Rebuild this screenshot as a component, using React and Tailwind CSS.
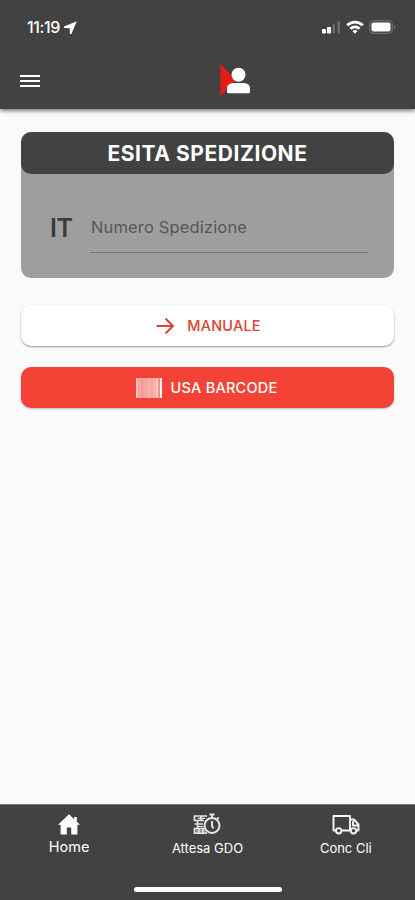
import { useState } from 'react';

const StatusBar = () => (
    <div className="flex h-[54px] items-center justify-between pr-[18px] pl-[27px]">
        <div className="flex items-center gap-[4px]">
            <span className="text-[16px] leading-5 font-medium tracking-[-0.35px]">11:19</span>
            <svg width="13" height="13" viewBox="0 0 13 13" fill="currentColor">
                <path d="M12.8.2 0 5.6v1.5l5.7.2.2 5.7h1.5z" />
            </svg>
        </div>
        <div className="flex items-center gap-[5px]">
            <svg width="20" height="14" viewBox="0 0 20 14" fill="currentColor">
                <rect x="1" y="9" width="4" height="4.5" rx="1" />
                <rect x="6" y="7" width="4" height="6.5" rx="1" />
                <rect x="11.5" y="4" width="2.5" height="9.5" rx="1" opacity="0.22" />
                <rect x="16.5" y="1" width="2.5" height="12.5" rx="1" opacity="0.22" />
            </svg>
            <svg width="18" height="14" viewBox="0 0 18 14" fill="none" stroke="currentColor" strokeWidth="2.8">
                <path d="M1.2 5.3C5.6 1 12.4 1 16.8 5.3" />
                <path d="M4.4 8.8c2.7-2.5 6.5-2.5 9.2 0" />
                <path d="M6.4 11 9 13.7l2.6-2.7c-1.5-1.4-3.7-1.4-5.2 0z" fill="currentColor" stroke="none" />
            </svg>
            <svg width="28" height="14" viewBox="0 0 28 14">
                <rect x="0.7" y="0.7" width="22.6" height="12.6" rx="4" fill="none" stroke="#6d6d6d" strokeWidth="1.3" />
                <rect x="2.5" y="2.5" width="19" height="9" rx="2" fill="#fff" />
                <path d="M24.8 4.7c2 .6 2 4 0 4.6z" fill="#6d6d6d" />
            </svg>
        </div>
    </div>
);

const Logo = () => (
    <svg width="32" height="34" viewBox="0 0 32 34">
        <path d="M.5 0v32L16 16z" fill="#e51b17" />
        <circle cx="18.5" cy="10.8" r="7" fill="#fff" />
        <path d="M7 28V24.500c0-4 3-5.500 7.500-5.500h8c4.500 0 7.500 1.500 7.500 5.500V28q0 1.200-1.200 1.200H8.200Q7 29.200 7 28z" fill="#fff" />
    </svg>
);

const BarcodeIcon = () => (
    <svg width="27" height="20" viewBox="0 0 27 20" fill="#fff">
        <rect x="0" width="2" height="20" opacity="0.7" />
        <rect x="2" width="5" height="20" opacity="0.45" />
        <rect x="3" width="2" height="20" opacity="0.2" />
        <rect x="7" width="13" height="20" opacity="0.52" />
        <rect x="12" width="2" height="20" opacity="0.15" />
        <rect x="17" width="2" height="20" opacity="0.2" />
        <rect x="20" width="2" height="20" opacity="0.75" />
        <rect x="22" width="2" height="20" opacity="0.4" />
        <rect x="24" width="2" height="20" opacity="0.95" />
    </svg>
);

const HomeIcon = () => (
    <svg width="22" height="21" viewBox="0 0 22 21" fill="#fff">
        <path d="M11 .3 0 10.8h2.6v9.700h6.200v-7h4.400v7h6.200v-9.700H22l-3.200-3.100V3h-2.600v2.200z" />
    </svg>
);

const WaitIcon = () => (
    <svg width="28" height="22" viewBox="0 0 28 22" fill="none" stroke="#e6e6e6" strokeWidth="1.7">
        <path d="M14 3H1.500v4.500h3V11h-3M14 20.200H1.500v-4.500h3V12M4.500 7.500H11M4.500 11h5.500M4.500 15.700H11M8 3v4.500M6 16v4M10 16v4" />
        <path d="M5 5.300h7M5 13.500h5M3 18h9" strokeWidth="1.2" />
        <circle cx="19" cy="12.5" r="7.5" strokeWidth="2" />
        <path d="M16.500 1.500h5M19 2v3M19 8v5l1.500 2.500M24 6l1.800-1.500" strokeWidth="1.9" />
    </svg>
);

const TruckIcon = () => (
    <svg width="28" height="21" viewBox="0 0 28 21" fill="none" stroke="#f5f5f5" strokeWidth="1.9" strokeLinejoin="round">
        <path d="M4 16.500H1.500V2H18v14.500H9.500M18 5.500h4l4.500 5v6H25M21 7v4.500h5" />
        <circle cx="6.7" cy="16.8" r="2.7" />
        <circle cx="21.5" cy="16.8" r="2.7" />
    </svg>
);

const App = () => {
    const [numero, setNumero] = useState('');

    return (
        <div className="flex h-[900px] w-full flex-col overflow-hidden bg-[#fafafa] font-['Inter',sans-serif]">
            <header className="z-10 h-[109px] shrink-0 bg-[#424242] text-white shadow-[0_2px_4px_rgba(0,0,0,0.5)]">
                <StatusBar />
                <div className="grid h-[54px] grid-cols-3 items-center px-5">
                    <button type="button" aria-label="Menu" className="flex w-5 flex-col gap-[3px]">
                        <span className="h-[2px] bg-white"></span>
                        <span className="h-[2px] bg-white"></span>
                        <span className="h-[2px] bg-white"></span>
                    </button>
                    <div className="flex justify-center pl-[56px]">
                        <Logo />
                    </div>
                </div>
            </header>

            <main className="flex flex-1 flex-col px-[21px] pt-[23px]">
                <section className="h-[146px] rounded-[10px] bg-[#9e9e9e]">
                    <h1 className="flex h-[42px] items-center justify-center rounded-[10px] bg-[#424242] pt-[2px] text-[21px] font-bold tracking-[0.55px] text-white">
                        ESITA SPEDIZIONE
                    </h1>
                    <div className="flex items-center pt-[29px] pr-[26px] pl-[29px]">
                        <span className="w-10 text-[25px] leading-[48px] font-semibold tracking-[-0.5px] text-[#3b3b3b]">IT</span>
                        <input
                            type="text"
                            value={numero}
                            onChange={e => setNumero(e.target.value)}
                            placeholder="Numero Spedizione"
                            className="h-[50px] min-w-0 flex-1 border-b border-[#777] pb-[2px] pl-px text-[16.5px] tracking-[0.15px] text-[#424242] outline-none placeholder:text-[#575757]"
                        />
                    </div>
                </section>

                <button
                    type="button"
                    className="mt-[27px] flex h-[41px] items-center justify-center gap-[12px] rounded-[10px] bg-white pt-px pl-[2px] text-[14.5px] font-medium tracking-[0.2px] text-[#dc4337] shadow-[0_1px_2px_rgba(0,0,0,0.4)]"
                >
                    <svg width="19" height="18" viewBox="0 0 19 18" fill="none" stroke="currentColor" strokeWidth="2">
                        <path d="M.5 9h16M9.500 1.500 17 9l-7.500 7.500" />
                    </svg>
                    MANUALE
                </button>
                <button
                    type="button"
                    className="mt-[21px] flex h-[41px] items-center justify-center gap-[7px] rounded-[10px] bg-[#f44336] pt-px pr-px text-[14.5px] font-medium tracking-[0.25px] text-white shadow-[0_1px_2px_rgba(0,0,0,0.25)]"
                >
                    <BarcodeIcon />
                    USA BARCODE
                </button>
            </main>

            <nav className="flex h-24 shrink-0 flex-col border-t border-[#777] bg-[#424242] text-white">
                <div className="grid h-[78px] grid-cols-3">
                    <a className="flex flex-col items-center pt-[9px] text-[14.5px]">
                        <HomeIcon />
                        <span className="mt-[2px] leading-5 tracking-[0.1px]">Home</span>
                    </a>
                    <a className="flex flex-col items-center pt-2 text-[13px]">
                        <WaitIcon />
                        <span className="mt-[3px] leading-5">Attesa GDO</span>
                    </a>
                    <a className="flex flex-col items-center pt-[9px] text-[13px]">
                        <TruckIcon />
                        <span className="mt-[3px] leading-5">Conc Cli</span>
                    </a>
                </div>
                <div className="mt-1 h-[5px] w-[148px] self-center rounded-full bg-white"></div>
            </nav>
        </div>
    );
};

export default App;
